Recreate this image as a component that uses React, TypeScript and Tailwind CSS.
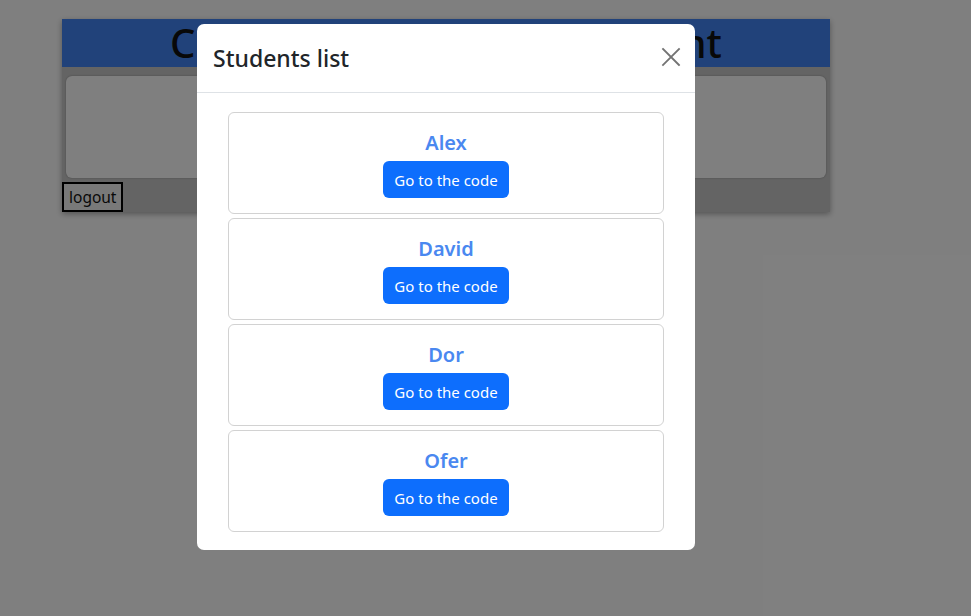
import React from 'react'

const students = ['Alex', 'David', 'Dor', 'Ofer']

function StudentCard({ name }: { name: string }) {
  return (
    <div className="flex flex-col items-center rounded-[6px] border border-[#d2d2d2] pt-[17px] pb-[15px]">
      <h5 className="text-[20px] leading-[26px] font-semibold text-[#4a88f0]">{name}</h5>
      <button className="mt-[5px] h-[37px] rounded-[6px] bg-[#0d6efd] px-[11px] text-[15px] leading-[24px] text-white">
        Go to the code
      </button>
    </div>
  )
}

export default function App() {
  return (
    <div className="relative h-[616px] w-[971px] overflow-hidden bg-white font-['Noto_Sans','Open_Sans',sans-serif]">
      {/* page behind the modal */}
      <div className="ml-[62px] pt-[19px]">
        <div className="w-[768px] bg-[#c8c8c8] shadow-[0_2px_6px_rgba(0,0,0,0.35)]">
          <div className="flex h-[48px] items-center justify-center bg-[#4285f4]">
            <h1 className="text-[40px] leading-[48px] font-medium text-[#111]">Choose the code assignment</h1>
          </div>
          <div className="px-[4px] pt-[9px] pb-[4px]">
            <div className="h-[102px] rounded-[6px] bg-white shadow-[0_0_2px_rgba(0,0,0,0.3)]" />
          </div>
          <button className="h-[30px] border-2 border-black bg-[#f2f2f2] px-[5px] text-[15.5px] leading-[24px] text-[#111]">
            logout
          </button>
        </div>
      </div>

      {/* backdrop */}
      <div className="absolute inset-0 bg-black/50" />

      {/* modal */}
      <div className="absolute left-[197px] top-[24px] w-[498px] rounded-[7px] bg-white">
        <div className="flex h-[69px] items-center justify-between border-b border-[#dee2e6] pl-[16px] pr-[14px]">
          <h5 className="text-[23px] leading-[36px] font-medium text-[#212529]">Students list</h5>
          <svg width="20" height="20" viewBox="0 0 20 20" className="mt-[-2px]">
            <path d="M2 2 L18 18 M18 2 L2 18" stroke="#737373" strokeWidth="1.8" strokeLinecap="square" />
          </svg>
        </div>
        <div className="flex flex-col gap-[4px] px-[31px] pt-[19px] pb-[18px]">
          {students.map((s) => (
            <StudentCard key={s} name={s} />
          ))}
        </div>
      </div>
    </div>
  )
}
